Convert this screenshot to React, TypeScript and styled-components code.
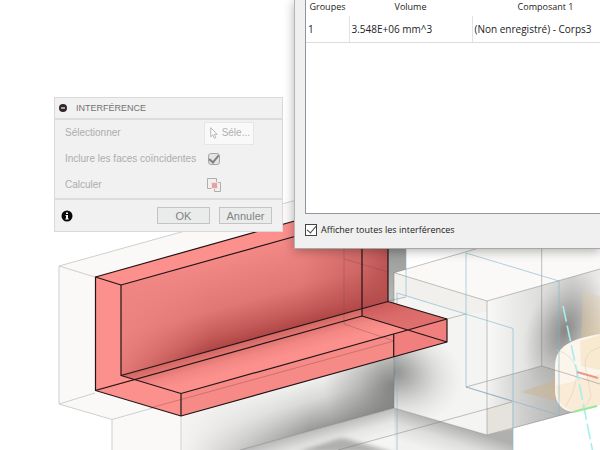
import React from "react";
import styled, { createGlobalStyle } from "styled-components";

const GlobalStyle = createGlobalStyle`
  * { box-sizing: border-box; }
  body { margin: 0; background: #ffffff; }
  button, input { font: inherit; margin: 0; }
`;

const Desktop = styled.main`
  position: relative;
  min-height: 100vh;
  overflow: hidden;
  background: #ffffff;
  font-family: "Liberation Sans", Arial, sans-serif;
`;

const Viewport = styled.svg`
  display: block;
  width: 100%;
  height: 100vh;
`;

const CommandPanel = styled.section`
  position: absolute;
  left: 54px;
  top: 97px;
  width: 229px;
  background: #f1f1f1;
  border: 1px solid #d9d9d9;
  color: #adadad;
  font-size: 10px;
  line-height: 12px;
`;

const PanelHeader = styled.header`
  display: flex;
  align-items: center;
  gap: 8px;
  height: 22px;
  padding: 0 3px;
  border-bottom: 2px solid #dcdcdc;
`;

const CollapseButton = styled.button`
  display: flex;
  padding: 0;
  border: 0;
  background: none;
`;

const PanelTitle = styled.h2`
  margin: 0;
  color: #737373;
  font-size: 9px;
  font-weight: 400;
`;

const PanelBody = styled.div`
  padding: 0 10px;
`;

const Field = styled.div`
  display: grid;
  grid-template-columns: 139px 1fr;
  align-items: center;
  height: 26px;
`;

const SelectButton = styled.button`
  display: flex;
  align-items: center;
  gap: 4px;
  width: 50px;
  height: 23px;
  padding: 0 3px 0 5px;
  border: 1px solid #e6e6e6;
  background: #f9f9f9;
  color: #b0b0b0;
`;

const ComputeButton = styled.button`
  display: flex;
  padding: 0;
  margin-left: 2px;
  border: 0;
  background: none;
`;

const Tick = styled.input<{ $tone: "soft" | "sharp" }>`
  appearance: none;
  display: grid;
  place-items: center;
  flex: none;
  width: 12px;
  height: 12px;
  margin: 0;
  margin-left: ${(p) => (p.$tone === "soft" ? "4px" : "0")};
  border: 1px solid ${(p) => (p.$tone === "soft" ? "#a6a6a6" : "#444444")};
  border-radius: ${(p) => (p.$tone === "soft" ? "3px" : "0")};
  background: ${(p) => (p.$tone === "soft" ? "#e4e4e4" : "#ffffff")};

  &:checked::after {
    content: "";
    width: 4px;
    height: 8px;
    margin-top: -2px;
    border: solid ${(p) => (p.$tone === "soft" ? "#808080" : "#444444")};
    border-width: 0 ${(p) => (p.$tone === "soft" ? "2px 2px" : "1px 1px")} 0;
    transform: rotate(40deg);
  }
`;

const PanelFooter = styled.footer`
  display: flex;
  align-items: center;
  gap: 9px;
  height: 33px;
  padding: 0 10px 0 6px;
  border-top: 2px solid #dcdcdc;
`;

const InfoButton = styled.button`
  display: flex;
  padding: 0;
  margin-right: auto;
  border: 0;
  background: none;
`;

const ActionButton = styled.button`
  width: 53px;
  height: 17px;
  padding: 0;
  border: 1px solid #c3c5c5;
  background: #e9eceb;
  color: #828282;
  font-size: 11px;
  line-height: 14px;
`;

const ResultsWindow = styled.section`
  position: absolute;
  left: 294px;
  right: 0;
  top: 0;
  padding-left: 10px;
  border-left: 1px solid #b4b4b4;
  border-bottom: 1px solid #a8a8a8;
  background: #f0f0f0;
  box-shadow: 0 2px 10px rgba(0, 0, 0, 0.3);
  color: #222222;
  font-family: "Open Sans", "Noto Sans", sans-serif;
  font-size: 9px;
  line-height: 14px;
`;

const TableFrame = styled.div`
  height: 214px;
  overflow: hidden;
  border-left: 1px solid #8d959e;
  border-bottom: 1px solid #8d959e;
  background: #ffffff;
`;

const ResultsTable = styled.table`
  table-layout: fixed;
  width: 100%;
  min-width: 313px;
  border-collapse: collapse;
`;

const HeadCell = styled.th`
  height: 15px;
  padding: 0 0 2px;
  font-size: 9px;
  font-weight: 400;
  text-align: center;
  white-space: nowrap;
`;

const Cell = styled.td`
  height: 26px;
  padding: 0 2px;
  border-bottom: 1px solid #dcdcdc;
  font-size: 10px;
  white-space: nowrap;

  & + & { border-left: 1px solid #e2e2e2; }
`;

const GroupColumn = styled.col`
  width: 43px;
`;

const VolumeColumn = styled.col`
  width: 123px;
`;

const ShowAll = styled.label`
  display: flex;
  align-items: center;
  gap: 4px;
  height: 34px;
  padding-bottom: 3px;
`;

const Model = () => (
  <Viewport viewBox="0 0 600 450" preserveAspectRatio="xMinYMin slice" aria-hidden="true">
    <defs>
      <filter id="fine" x="-30%" y="-60%" width="160%" height="220%">
        <feGaussianBlur stdDeviation="2" />
      </filter>
      <linearGradient id="backRed" gradientUnits="userSpaceOnUse" x1="254" y1="338" x2="230" y2="252">
        <stop offset="0" stopColor="#b04645" />
        <stop offset="0.14" stopColor="#c45a58" />
        <stop offset="0.42" stopColor="#df7774" />
        <stop offset="1" stopColor="#f58a87" />
      </linearGradient>
      <linearGradient id="backFade" gradientUnits="userSpaceOnUse" x1="121" y1="0" x2="210" y2="0">
        <stop offset="0" stopColor="#ee8582" stopOpacity="0.8" />
        <stop offset="1" stopColor="#ee8582" stopOpacity="0" />
      </linearGradient>
      <linearGradient id="backCorner" gradientUnits="userSpaceOnUse" x1="300" y1="0" x2="388" y2="0">
        <stop offset="0" stopColor="#b54e4e" stopOpacity="0" />
        <stop offset="0.68" stopColor="#b54e4e" stopOpacity="0.4" />
        <stop offset="1" stopColor="#b54e4e" stopOpacity="0.85" />
      </linearGradient>
      <linearGradient id="floorRed" gradientUnits="userSpaceOnUse" x1="250" y1="339" x2="257" y2="364">
        <stop offset="0" stopColor="#cf6461" />
        <stop offset="0.6" stopColor="#f28683" />
        <stop offset="1" stopColor="#fb908d" />
      </linearGradient>
      <linearGradient id="wall" gradientUnits="userSpaceOnUse" x1="300" y1="382" x2="314" y2="431">
        <stop offset="0" stopColor="#f1f1ef" />
        <stop offset="0.4" stopColor="#d9d9d7" />
        <stop offset="1" stopColor="#969694" />
      </linearGradient>
      <linearGradient id="wallFade" gradientUnits="userSpaceOnUse" x1="181" y1="0" x2="310" y2="0">
        <stop offset="0" stopColor="#f5f4f2" />
        <stop offset="0.3" stopColor="#f0efed" stopOpacity="0.7" />
        <stop offset="1" stopColor="#efefed" stopOpacity="0" />
      </linearGradient>
      <radialGradient id="wallCorner" gradientUnits="userSpaceOnUse" cx="394" cy="385" r="70">
        <stop offset="0" stopColor="#6d6d6b" stopOpacity="0.75" />
        <stop offset="0.5" stopColor="#6d6d6b" stopOpacity="0.3" />
        <stop offset="1" stopColor="#6d6d6b" stopOpacity="0" />
      </radialGradient>
      <linearGradient id="ground" gradientUnits="userSpaceOnUse" x1="340" y1="422" x2="348" y2="450">
        <stop offset="0" stopColor="#bababa" />
        <stop offset="0.5" stopColor="#e6e6e5" />
        <stop offset="1" stopColor="#f5f5f4" />
      </linearGradient>
      <linearGradient id="under" gradientUnits="userSpaceOnUse" x1="442" y1="421" x2="432" y2="452">
        <stop offset="0" stopColor="#b0b0af" />
        <stop offset="0.5" stopColor="#dededd" />
        <stop offset="1" stopColor="#f2f2f1" />
      </linearGradient>
      <linearGradient id="strip" x1="0" y1="0" x2="0" y2="1">
        <stop offset="0" stopColor="#959694" />
        <stop offset="1" stopColor="#b8b9b7" />
      </linearGradient>
      <radialGradient id="frontShade" gradientUnits="userSpaceOnUse" cx="0" cy="0" r="1" gradientTransform="translate(392 372) rotate(14) scale(72 52)">
        <stop offset="0" stopColor="#777776" stopOpacity="0.85" />
        <stop offset="0.3" stopColor="#8a8a89" stopOpacity="0.6" />
        <stop offset="0.65" stopColor="#a0a09f" stopOpacity="0.25" />
        <stop offset="1" stopColor="#c0c0bf" stopOpacity="0" />
      </radialGradient>
      <linearGradient id="side" gradientUnits="userSpaceOnUse" x1="487" y1="0" x2="600" y2="0">
        <stop offset="0" stopColor="#f8f8f7" />
        <stop offset="0.45" stopColor="#dededd" />
        <stop offset="0.75" stopColor="#d6d6d5" />
        <stop offset="1" stopColor="#ebeae8" />
      </linearGradient>
      <radialGradient id="sideShade" gradientUnits="userSpaceOnUse" cx="0" cy="0" r="1" gradientTransform="translate(565 330) rotate(22) scale(38 62)">
        <stop offset="0" stopColor="#6c6c6b" stopOpacity="0.75" />
        <stop offset="0.4" stopColor="#80807f" stopOpacity="0.5" />
        <stop offset="1" stopColor="#a0a09f" stopOpacity="0" />
      </radialGradient>
      <linearGradient id="sideFloor" gradientUnits="userSpaceOnUse" x1="480" y1="0" x2="573" y2="0">
        <stop offset="0" stopColor="#a5a5a4" stopOpacity="0" />
        <stop offset="1" stopColor="#a5a5a4" stopOpacity="0.75" />
      </linearGradient>
      <linearGradient id="tan" x1="0" y1="0" x2="0" y2="1">
        <stop offset="0" stopColor="#e2cda9" stopOpacity="0.3" />
        <stop offset="1" stopColor="#d3b78a" stopOpacity="0.65" />
      </linearGradient>
    </defs>

    <path d="M59 266 300 199H388V330L181 416 112 419 59 404Z" fill="#faf9f7" />
    <path d="M112 419 181 400V450H112Z" fill="#faf9f7" />
    <path d="M181 416 394 356V408L240 450H181Z" fill="url(#wall)" />
    <path d="M181 416 394 356V408L240 450H181Z" fill="url(#wallFade)" />
    <path d="M300 382 394 356V408L300 434Z" fill="url(#wallCorner)" />
    <path d="M394 408 240 450H397Z" fill="url(#ground)" />
    <path d="M394 408 487 435 513 402V450H394Z" fill="url(#under)" />
    <path d="M296 452 334 440Q340 437 347 439L396 453Z" fill="#a6a6a4" opacity="0.85" filter="url(#fine)" />

    <path d="M388 240H406V297L394 300V303L388 301Z" fill="url(#strip)" />
    <path d="M394 272.7 479 248H600V269L487 301Z" fill="#faf9f7" />
    <path d="M394 272.7 487 301V435L394 408Z" fill="#f4f4f3" />
    <path d="M394 325 487 325V435L394 408Z" fill="url(#frontShade)" />
    <path d="M394 272.7 487 301V312L466 314 406 297 394 300Z" fill="#f1f0ed" />
    <path d="M487 301 600 269V405L487 435Z" fill="url(#side)" />
    <path d="M487 301 600 269V405L487 435Z" fill="url(#sideShade)" />
    <path d="M487 381 542 366 573 376V412L487 435Z" fill="url(#sideFloor)" />
    <path d="M487 409 512 402V429L487 435Z" fill="#e6e3dd" />
    <path d="M583 291 600 296V350L581 345Z" fill="url(#tan)" />
    <path d="M521 392 556 380V401Z" fill="#cdb48b" opacity="0.5" />

    <path d="M600 334C578 338 555 343 555 366V390C555 403 562 411 573 412L600 405Z" fill="#fbf5ec" />
    <path d="M580 341 600 335V370L581 366Z" fill="#f8e9d1" />
    <path d="M556 386 600 374V405L574 411Q557 408 556 386Z" fill="#f9ebd5" />
    <g fill="none" stroke="#d8ccb8" strokeWidth="0.7" opacity="0.7">
      <path d="M600 347Q584 352 585 366Q589 384 591 396Q587 408 575 411M556 350Q573 354 577 371Q576 391 565 407" />
    </g>

    <g fill="none" stroke="#777777" strokeOpacity="0.45" strokeWidth="1">
      <path d="M394 272.7 487 301 600 269M487 301V435L394 408M487 435 573 412M394 272.7 479 248" />
      <path d="M394 272.7V408L240 450M541.7 248V366L466 387 512 401M541.7 366 600 384M338 450 512 402M388 301 406 297M447 319 466 314" />
    </g>
    <g fill="none" stroke="#80b4cd" strokeOpacity="0.6" strokeWidth="1">
      <path d="M466 253 559 281V415L466 387ZM406 248V296M397 450V293L513 328.5V450" />
    </g>
    <g fill="none" stroke="#cfcfcd" strokeWidth="1">
      <path d="M95 277 59 266 300 199M59 266V404L112 419.5 181 400M59 404 95 393M112 419V450M181 416V450" />
    </g>

    <path d="M95 277 300 219.5V235L121 285V375L181 393V416L95 390Z" fill="#fb908d" />
    <path d="M121 285 362 217.5 388 220V301.5L121 375.5Z" fill="url(#backRed)" />
    <path d="M121 285 362 217.5V309L121 375.5Z" fill="url(#backFade)" />
    <path d="M300 235 388 220V301.5L300 326Z" fill="url(#backCorner)" />
    <path d="M121 375.5 388 301.5 447 319 181 393.5Z" fill="url(#floorRed)" />
    <path d="M362 309 388 301.5 447 319 408 330 362 316Z" fill="#c75453" opacity="0.55" />
    <path d="M181 393.5 447 319V342L181 416Z" fill="#f58a87" />
    <path d="M394 334 447 319V342L394 357Z" fill="#f07f7d" />
    <g fill="none" stroke="#844444" strokeOpacity="0.35" strokeWidth="1">
      <path d="M344 240V324L394 341M95 390 181 367M150 408 394 341M344 259 388 272" />
    </g>
    <g fill="none" stroke="#241416" strokeWidth="1.2" strokeLinejoin="round">
      <path d="M300 219.5 95.5 277V390.5L181 416 447 342V319L388 301.5 121 375.5V285L300 235" />
      <path d="M95.5 277 121 285M121 375.5 181 393.5V416M181 393.5 447 319M95.5 390.5 362 316 447 342M362 316V240M388 301.5V240M393.7 334V357" />
    </g>

    <path d="M563 306 577 372 593 453" fill="none" stroke="#a4eff0" strokeWidth="1.6" strokeDasharray="16 4" />
    <path d="M577 372 598 378" stroke="#f0958a" strokeWidth="2" />
    <path d="M573 412 597 406" stroke="#98e79b" strokeWidth="2" />
  </Viewport>
);

export default function App() {
  return (
    <>
      <GlobalStyle />
      <Desktop>
        <Model />

        <CommandPanel aria-labelledby="command-title">
          <PanelHeader>
            <CollapseButton type="button" aria-label="Réduire">
              <svg width="10" height="10" viewBox="0 0 10 10">
                <circle cx="5" cy="5" r="4" fill="#30272a" />
                <path d="M3 5h4" stroke="#e8e8e8" strokeWidth="1.3" />
              </svg>
            </CollapseButton>
            <PanelTitle id="command-title">INTERFÉRENCE</PanelTitle>
          </PanelHeader>
          <PanelBody>
            <Field>
              <span id="select-label">Sélectionner</span>
              <SelectButton type="button" aria-describedby="select-label">
                <svg width="10" height="16" viewBox="0 0 10 16">
                  <path d="M1 1v12l2.700-2.600L5.800 15l1.900-.9-1.900-4.300H9.300z" fill="#fcfcfc" stroke="#a5a5a5" strokeLinejoin="round" />
                </svg>
                Séle...
              </SelectButton>
            </Field>
            <Field>
              <label htmlFor="coincident">Inclure les faces coïncidentes</label>
              <Tick id="coincident" type="checkbox" defaultChecked $tone="soft" />
            </Field>
            <Field>
              <span id="compute-label">Calculer</span>
              <ComputeButton type="button" aria-labelledby="compute-label">
                <svg width="16" height="16" viewBox="0 0 16 16" fill="none">
                  <path d="M6 11.5H1.5V1.5H10.500V5M12 5.500H14.500V14.500H8.500V12" stroke="#b1adad" />
                  <path d="M5.500 5.500h6v6h-6z" fill="#e4a5a2" stroke="#f5dedd" />
                </svg>
              </ComputeButton>
            </Field>
          </PanelBody>
          <PanelFooter>
            <InfoButton type="button" aria-label="Informations">
              <svg width="12" height="12" viewBox="0 0 12 12">
                <circle cx="6" cy="6" r="5.500" fill="#080808" />
                <path d="M5 2.500h2v1.500H5zM4.500 5H7v3.500h.7v1H4.300v-1H5V6h-.5z" fill="#f5f5f5" />
              </svg>
            </InfoButton>
            <ActionButton type="button">OK</ActionButton>
            <ActionButton type="button">Annuler</ActionButton>
          </PanelFooter>
        </CommandPanel>

        <ResultsWindow aria-label="Résultats">
          <TableFrame>
            <ResultsTable>
              <colgroup>
                <GroupColumn />
                <VolumeColumn />
                <col />
              </colgroup>
              <thead>
                <tr>
                  <HeadCell scope="col">Groupes</HeadCell>
                  <HeadCell scope="col">Volume</HeadCell>
                  <HeadCell scope="col">Composant 1</HeadCell>
                </tr>
              </thead>
              <tbody>
                <tr>
                  <Cell>1</Cell>
                  <Cell>3.548E+06 mm^3</Cell>
                  <Cell>(Non enregistré) - Corps3</Cell>
                </tr>
              </tbody>
            </ResultsTable>
          </TableFrame>
          <ShowAll>
            <Tick type="checkbox" defaultChecked $tone="sharp" />
            Afficher toutes les interférences
          </ShowAll>
        </ResultsWindow>
      </Desktop>
    </>
  );
}
